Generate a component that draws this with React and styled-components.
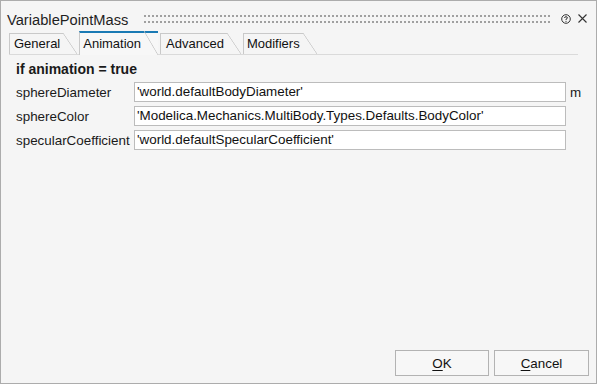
import React from "react";
import styled, { createGlobalStyle } from "styled-components";

const Global = createGlobalStyle`
  html, body { margin: 0; padding: 0; background: #f5f5f5; }
  body { font-family: "Liberation Sans", Arial, sans-serif; font-size: 13px; color: #1a1a1a; }
  * { box-sizing: border-box; }
`;

const Window = styled.div`
  width: 597px;
  height: 384px;
  border: 1px solid #acacac;
  background: #f5f5f5;
  display: flex;
  flex-direction: column;
`;

const TitleBar = styled.div`
  height: 30px;
  display: flex;
  align-items: flex-start;
  padding: 11px 9px 0 6px;
`;

const Title = styled.div`
  font-size: 14.7px;
  line-height: 17px;
  color: #1f1f1f;
  white-space: nowrap;
`;

const Grip = styled.div`
  flex: 1;
  height: 8px;
  margin: 3px 11px 0 16px;
  background-image: radial-gradient(circle at 1px 1px, #a0a0a0 0.9px, transparent 1.2px);
  background-size: 4px 6px;
`;

const IconButton = styled.span`
  display: flex;
  width: ${(p) => p.$w}px;
  height: 10px;
  margin: 2px 0 0 ${(p) => p.$ml}px;
  color: #333;
`;

const TabBar = styled.div`
  display: flex;
  align-items: flex-start;
  gap: 2px;
  height: 24px;
  margin: 0 18px 0 8px;
  border-bottom: 1px solid #dadada;
`;

const Tab = styled.div`
  position: relative;
  height: ${(p) => (p.$active ? 24 : 21)}px;
  margin-top: ${(p) => (p.$active ? 0 : 2)}px;
  padding: 3px 17px 0 ${(p) => p.$pl}px;
  line-height: 15px;
  white-space: nowrap;
  color: #111;
  background: ${(p) => (p.$active ? "#f7f7f7" : "transparent")};
  border-left: 1px solid #c9c9c9;
  border-top: ${(p) => (p.$active ? "2px solid #1a7ab4" : "none")};
  &::before {
    content: "";
    position: absolute;
    left: 0;
    right: 14px;
    top: ${(p) => (p.$active ? -2 : 0)}px;
    height: ${(p) => (p.$active ? 2 : 1)}px;
    background: ${(p) => (p.$active ? "#1a7ab4" : "#c9c9c9")};
  }
  &::after {
    content: "";
    position: absolute;
    right: 0;
    top: ${(p) => (p.$active ? -2 : 0)}px;
    bottom: 0;
    width: 14px;
    background: linear-gradient(
      to top right,
      transparent calc(50% - 0.7px),
      #c9c9c9 50%,
      transparent calc(50% + 0.7px)
    );
  }
`;

const Content = styled.div`
  flex: 1;
  padding: 7px 0 0 15px;
  font-size: 13.4px;
`;

const Heading = styled.div`
  font-weight: bold;
  font-size: 14px;
  line-height: 15px;
  margin-bottom: 5px;
`;

const Form = styled.div`
  display: grid;
  grid-template-columns: 118px 432px auto;
  row-gap: 4px;
  align-items: center;
`;

const Label = styled.div`
  line-height: 15px;
  white-space: nowrap;
`;

const Field = styled.div`
  height: 20px;
  border: 1px solid #bcbcbc;
  background: #fff;
  padding: 1px 0 0 2px;
  line-height: 16px;
  white-space: nowrap;
  overflow: hidden;
  color: #111;
`;

const Unit = styled.div`
  padding-left: 4px;
  line-height: 15px;
`;

const Footer = styled.div`
  display: flex;
  justify-content: flex-end;
  gap: 5px;
  padding: 0 7px 7px 0;
`;

const Button = styled.button`
  width: ${(p) => p.$w}px;
  height: 26px;
  border: 1px solid #b3b3b3;
  background: #f7f7f7;
  font-family: "Liberation Sans", Arial, sans-serif;
  font-size: 13.4px;
  color: #111;
  padding: 0;
  u { text-decoration-thickness: 1px; text-underline-offset: 2px; }
`;

const tabs = [
  { name: "General", pl: 4 },
  { name: "Animation", pl: 3, active: true },
  { name: "Advanced", pl: 5 },
  { name: "Modifiers", pl: 3 },
];

const rows = [
  { label: "sphereDiameter", value: "'world.defaultBodyDiameter'", unit: "m" },
  { label: "sphereColor", value: "'Modelica.Mechanics.MultiBody.Types.Defaults.BodyColor'" },
  { label: "specularCoefficient", value: "'world.defaultSpecularCoefficient'" },
];

export default function App() {
  return (
    <>
      <Global />
      <Window>
        <TitleBar>
          <Title>VariablePointMass</Title>
          <Grip />
          <IconButton $w={10} $ml={0}>
            <svg width="10" height="10" viewBox="0 0 10 10">
              <circle cx="5" cy="5" r="4.3" fill="none" stroke="#333" strokeWidth="1" />
              <path d="M3.6 4 Q3.6 2.7 5 2.7 Q6.4 2.7 6.4 3.9 Q6.4 4.7 5 5.2 L5 6" fill="none" stroke="#333" strokeWidth="1" />
              <circle cx="5" cy="7.3" r="0.6" fill="#333" />
            </svg>
          </IconButton>
          <IconButton $w={9} $ml={7}>
            <svg width="9" height="9" viewBox="0 0 9 9">
              <path d="M0.5 0.5 L8.5 8.5 M8.5 0.5 L0.5 8.5" stroke="#333" strokeWidth="1.1" />
            </svg>
          </IconButton>
        </TitleBar>
        <TabBar>
          {tabs.map((t) => (
            <Tab key={t.name} $active={t.active} $pl={t.pl}>
              {t.name}
            </Tab>
          ))}
        </TabBar>
        <Content>
          <Heading>if animation = true</Heading>
          <Form>
            {rows.map((r) => (
              <React.Fragment key={r.label}>
                <Label>{r.label}</Label>
                <Field>{r.value}</Field>
                <Unit>{r.unit || ""}</Unit>
              </React.Fragment>
            ))}
          </Form>
        </Content>
        <Footer>
          <Button $w={94}>
            <u>O</u>K
          </Button>
          <Button $w={95}>
            <u>C</u>ancel
          </Button>
        </Footer>
      </Window>
    </>
  );
}
